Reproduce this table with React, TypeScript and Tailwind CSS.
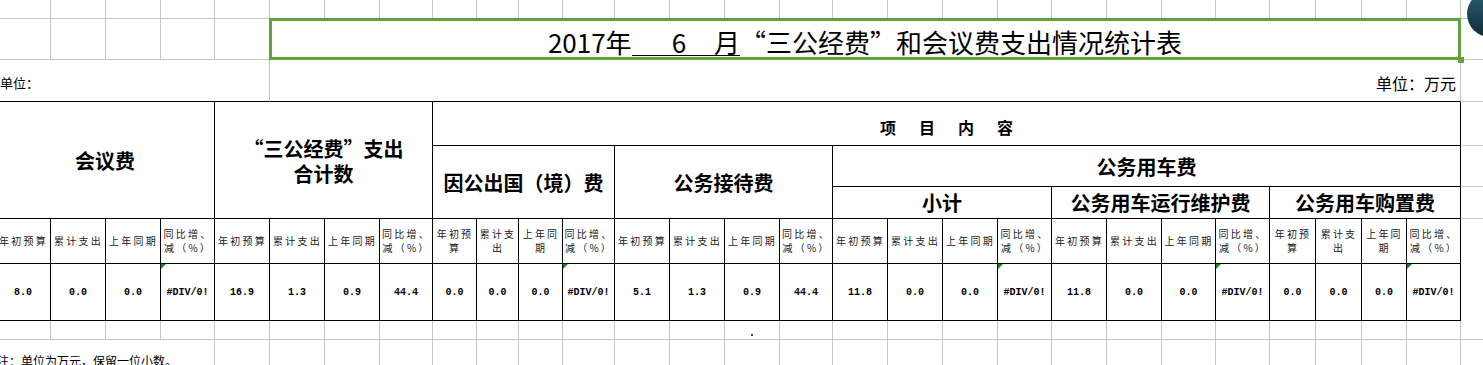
const grid = "border-r border-b border-[#c6c6c6]";
const line = "border-r border-b border-black";

const labels = ["年初预算", "累计支出", "上年同期", "同比增、减（%）"];

const data = [
  ["8.0", "0.0", "0.0", "#DIV/0!"],
  ["16.9", "1.3", "0.9", "44.4"],
  ["0.0", "0.0", "0.0", "#DIV/0!"],
  ["5.1", "1.3", "0.9", "44.4"],
  ["11.8", "0.0", "0.0", "#DIV/0!"],
  ["11.8", "0.0", "0.0", "#DIV/0!"],
  ["0.0", "0.0", "0.0", "#DIV/0!"],
];

function ErrorMark() {
  return (
    <span className="absolute left-0 top-0 h-0 w-0 border-t-[5px] border-r-[5px] border-t-[#0e8a12] border-r-transparent" />
  );
}

function Head({ className, children }: { className: string; children: React.ReactNode }) {
  return (
    <div className={`${className} ${line} flex items-center justify-center text-center text-[20px] leading-[25px] font-bold`}>
      {children}
    </div>
  );
}

export default function App() {
  const values = data.flat();
  return (
    <div
      lang="zh-CN"
      className="relative h-[365px] w-[1483px] overflow-hidden bg-white text-black font-['Noto_Sans_CJK_SC',sans-serif]"
    >
      <div className="-ml-[4px] grid grid-cols-[55px_55px_55px_54px_55px_55px_55px_53px_44px_42px_44px_52px_55px_55px_55px_53px_55px_55px_55px_54px_55px_55px_54px_54px_46px_46px_45px_54px_60px] grid-rows-[19px_41px_42px_44px_41px_32px_45px_57px_19px_30px]">
        {/* row 1 */}
        {Array.from({ length: 29 }).map((_, i) => (
          <div key={`a${i}`} className={`row-start-1 ${grid}`} />
        ))}

        {/* row 2: title */}
        {Array.from({ length: 5 }).map((_, i) => (
          <div key={`b${i}`} className={`row-start-2 ${grid}`} />
        ))}
        <div className={`relative col-start-6 col-span-23 row-start-2 flex items-center justify-center pt-[6px] ${grid}`}>
          <span className="text-[26px] leading-[26px]">
            2017年
            <span className="inline-block border-b-[1.5px] border-black pl-[40px] leading-[26px]">
              6<span className="ml-[28px]">月</span>
            </span>
            “三公经费”和会议费支出情况统计表
          </span>
          <span className="pointer-events-none absolute -inset-px border-[3px] border-[#5ca43c]" />
          <span className="absolute -bottom-[4px] -right-[4px] h-[6px] w-[6px] bg-[#5ca43c]" />
        </div>
        <div className={`col-start-29 row-start-2 ${grid}`} />

        {/* row 3: units */}
        <div className="col-start-1 col-span-5 row-start-3 flex items-center border-r border-b border-r-[#c6c6c6] border-b-black pl-[4px] pt-[4px] text-[13px]">
          单位：
        </div>
        <div className="col-start-6 col-span-23 row-start-3 flex items-center justify-end border-r border-b border-r-[#c6c6c6] border-b-black pr-[4px] pt-[4px] text-[16px]">
          单位：万元
        </div>
        <div className={`col-start-29 row-start-3 ${grid}`} />

        {/* header block */}
        <Head className="col-start-1 col-span-4 row-start-4 row-span-3">会议费</Head>
        <Head className="col-start-5 col-span-4 row-start-4 row-span-3">
          <span className="pt-[2px]">
            “三公经费”支出
            <br />
            合计数
          </span>
        </Head>
        <div className={`col-start-9 col-span-20 row-start-4 flex items-center justify-center gap-[23px] pt-[6px] text-[16px] font-bold ${line}`}>
          <span>项</span>
          <span>目</span>
          <span>内</span>
          <span>容</span>
        </div>
        <Head className="col-start-9 col-span-4 row-start-5 row-span-2">因公出国（境）费</Head>
        <Head className="col-start-13 col-span-4 row-start-5 row-span-2">公务接待费</Head>
        <Head className="col-start-17 col-span-12 row-start-5">公务用车费</Head>
        <Head className="col-start-17 col-span-4 row-start-6">小计</Head>
        <Head className="col-start-21 col-span-4 row-start-6">公务用车运行维护费</Head>
        <Head className="col-start-25 col-span-4 row-start-6">公务用车购置费</Head>
        <div className="col-start-29 row-start-4 border-b border-[#c6c6c6]" />
        <div className="col-start-29 row-start-5 border-b border-[#c6c6c6]" />
        <div className="col-start-29 row-start-6 border-b border-[#c6c6c6]" />
        <div className="col-start-29 row-start-7 row-span-3 border-b border-[#c6c6c6]" />

        {/* column labels */}
        {values.map((_, i) => (
          <div
            key={`l${i}`}
            className={`row-start-7 flex items-center justify-center pl-[1px] text-center text-[10px] leading-[14px] tracking-[2.2px] text-[#1a1a1a] ${line}`}
          >
            {labels[i % 4]}
          </div>
        ))}

        {/* values */}
        {values.map((v, i) => (
          <div
            key={`v${i}`}
            className={`relative row-start-8 flex items-center justify-center font-['Liberation_Mono',monospace] text-[10px] font-bold ${line}`}
          >
            {v === "#DIV/0!" && <ErrorMark />}
            {v}
          </div>
        ))}

        {/* empty row */}
        {values.map((_, i) => (
          <div key={`e${i}`} className={`row-start-9 flex justify-center pt-[13px] ${grid}`}>
            {i === 14 && <span className="h-[2px] w-[2px] bg-[#444]" />}
          </div>
        ))}

        {/* note row */}
        <div className={`col-span-4 row-start-10 whitespace-nowrap pl-[1px] pt-[15px] text-[12px] leading-none ${grid}`}>
          注：单位为万元，保留一位小数。
        </div>
        {Array.from({ length: 25 }).map((_, i) => (
          <div key={`n${i}`} className={`row-start-10 ${grid}`} />
        ))}
      </div>

      <div className="absolute left-[1467px] -top-[9px] h-[46px] w-[46px] rounded-full bg-linear-to-b from-[#2c6176] to-[#102c39]" />
    </div>
  );
}
